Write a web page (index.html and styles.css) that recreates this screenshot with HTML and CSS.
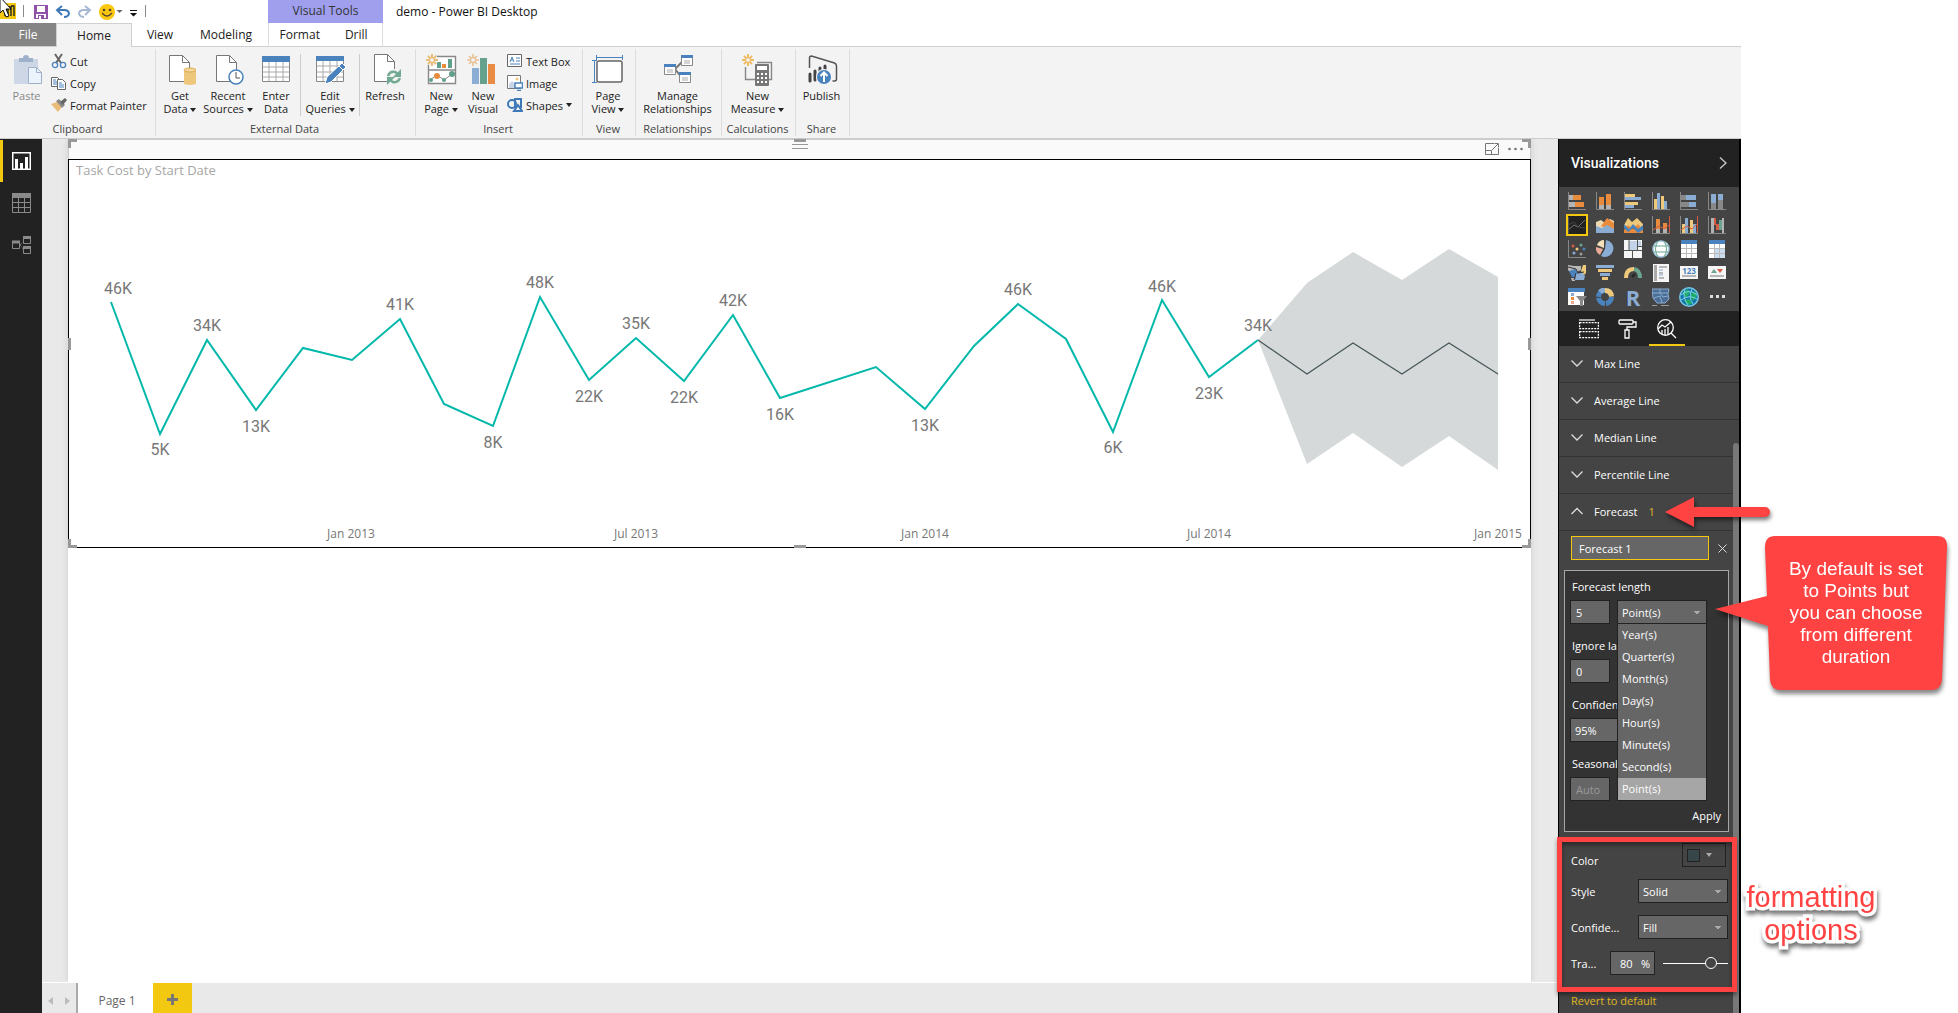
FILE: index.html
```html
<!DOCTYPE html>
<html lang="en">
<head>
<meta charset="utf-8">
<title>demo - Power BI Desktop</title>
<link rel="stylesheet" href="styles.css">
</head>
<body>
<div class="app">
  <header class="titlebar">
    <div class="title-left">
      <div class="quick">
        <svg width="150" height="24" viewBox="0 0 150 24" aria-hidden="true">
          <rect x="0" y="3" width="16" height="16" fill="#f2c811"/>
          <path d="M5 16V9h3v7M8 7h3v9M11 6h3v10" fill="none" stroke="#222" stroke-width="1.4"/>
          <path d="M0-3L11 9H6l3 7-3 1-3-7-3 3z" fill="#fff" stroke="#111"/>
          <path d="M23.500 5v12M145.500 5v12" stroke="#8a8a8a"/>
          <path d="M34 5h14v14H34z" fill="#8f52a8"/><path d="M37 6h8v6h-8zM36 14h10v4H36z" fill="#fff"/><path d="M38 15h6v4h-6z" fill="#8f52a8"/><path d="M39 16h2v3h-2z" fill="#fff"/>
          <path d="M62 6l-5 4 5 5M57 10h7q5 0 5 4-1 3-5 3" fill="none" stroke="#3e78b8" stroke-width="2"/>
          <path d="M85 6l5 4-5 5M90 10h-6q-5 0-5 4 1 3 5 3" fill="none" stroke="#a5b8d2" stroke-width="2"/>
          <circle cx="107" cy="12" r="8" fill="#fcc70f"/><circle cx="104" cy="10" r="1.300" fill="#543"/><circle cx="110" cy="10" r="1.300" fill="#543"/><path d="M102 13q5 6 10 0" fill="none" stroke="#543" stroke-width="1.300"/>
          <path d="M116.500 10h6l-3 3z" fill="#666"/>
          <path d="M130 10h7v1h-7zM130 13h7l-3.500 3.500z" fill="#111"/>
        </svg>
      </div>
      <nav class="tabs">
        <button class="tab file">File</button><button class="tab home">Home</button><button class="tab">View</button><button class="tab modeling">Modeling</button>
      </nav>
    </div>
    <div class="context">
      <div class="context-title">Visual Tools</div>
      <nav class="context-tabs"><button class="tab format">Format</button><button class="tab drill">Drill</button></nav>
    </div>
    <div class="doc-title">demo - Power BI Desktop</div>
  </header>

  <section class="ribbon">
    <div class="group clipboard">
      <div class="tools">
        <button class="big paste"><svg width="32" height="32"><path d="M3 5h24v25H3z" fill="#cdd7e6"/><path d="M8 4h4q0-3 3-3t3 3h4v4H8z" fill="#9fb0cb"/><path d="M17.500 13.500h8l5 5v11h-13z" fill="#ebf3fc" stroke="#9fb0cb"/><path d="M25.500 13.500v5h5" fill="none" stroke="#9fb0cb"/></svg><span>Paste</span></button>
        <div class="smalls">
          <button class="small"><svg width="16" height="16"><path d="M4 1l6 9M11 1l-6 9" stroke="#666" stroke-width="2"/><circle cx="4" cy="12" r="2.600" fill="none" stroke="#4a82bd" stroke-width="1.300"/><circle cx="12" cy="12" r="2.600" fill="none" stroke="#4a82bd" stroke-width="1.300"/></svg>Cut</button>
          <button class="small"><svg width="16" height="16"><path d="M.5 2.500h6l3 3v6h-9z" fill="#fff" stroke="#666"/><path d="M2 5h3M2 7h4M2 9h4" stroke="#4a82bd"/><path d="M6.500 4.500h5l3 3v7h-8z" fill="#fff" stroke="#666"/><path d="M8 8h3M8 10h5M8 12h5" stroke="#4a82bd"/></svg>Copy</button>
          <button class="small"><svg width="16" height="16"><path d="M0 7l6-2 5 5-4 5z" fill="#e9bd77"/><path d="M5 4l3-2 6 6-3 3z" fill="#888"/><path d="M9 5l5-4 2 2-4 5z" fill="#666"/></svg>Format Painter</button>
        </div>
      </div>
      <div class="caption">Clipboard</div>
    </div>
    <div class="group external">
      <div class="tools">
        <button class="big"><svg width="32" height="32"><path d="M5.500 1.500h13l7 7v19h-20z" fill="#fff" stroke="#777"/><path d="M18.500 1.500v7h7" fill="none" stroke="#777"/><path d="M20 16h12v14q-6 2-12 0z" fill="#edc77b"/><ellipse cx="26" cy="16" rx="6" ry="2" fill="#f3d79c" stroke="#dba94f"/></svg><span>Get<br>Data <i class="caret"></i></span></button>
        <button class="big"><svg width="32" height="32"><path d="M4.500 1.500h13l7 7v19h-20z" fill="#fff" stroke="#777"/><path d="M17.500 1.500v7h7" fill="none" stroke="#777"/><circle cx="24" cy="23" r="7" fill="#fff" stroke="#4a82bd" stroke-width="1.500"/><path d="M24 18v6h4" fill="none" stroke="#555"/></svg><span>Recent<br>Sources <i class="caret"></i></span></button>
        <button class="big enter"><svg width="32" height="32"><path d="M2.500 2.500h27v25h-27z" fill="#fff" stroke="#888"/><path d="M2 2h28v6H2z" fill="#4a82bd"/><path d="M3 13h26M3 18h26M3 23h26M9 8v19M16 8v19M23 8v19" stroke="#aaa"/></svg><span>Enter<br>Data</span></button>
        <button class="big ruled edit"><svg width="32" height="32"><path d="M2.500 2.500h27v25h-27z" fill="#fff" stroke="#888"/><path d="M2 2h28v5H2z" fill="#4a82bd"/><path d="M3 12h26M3 18h26M3 23h26M9 7v20M16 7v20M23 7v20" stroke="#aaa"/><path d="M11 30l2-7L28 9l4 4-15 15z" fill="#4a82bd" stroke="#fff"/><path d="M25 12l4 4" stroke="#fff"/></svg><span>Edit<br>Queries <i class="caret"></i></span></button>
        <button class="big ruled refresh"><svg width="32" height="32"><path d="M5.500 .5h13l7 7v20h-20z" fill="#fff" stroke="#777"/><path d="M18.500 .5v7h7" fill="none" stroke="#777"/><circle cx="25" cy="23" r="8" fill="#f3f3f3"/><path d="M19 22q2-5 7-4l3 2M31 24q-2 5-7 4l-3-2" fill="none" stroke="#73aa94" stroke-width="2.500"/><path d="M32 15v8h-8zM18 31v-8h8z" fill="#73aa94"/></svg><span>Refresh</span></button>
      </div>
      <div class="caption">External Data</div>
    </div>
    <div class="group insert">
      <div class="tools">
        <button class="big newpage"><svg width="32" height="32"><path d="M3.500 2.500h27v27h-27zM3 16h28" fill="#fff" stroke="#888" stroke-width="1.400"/><path d="M12 8h4v6h-4zM23 5h4v9h-4z" fill="#5f9f8b"/><path d="M17 10h4v4h-4z" fill="#e88b3c"/><path d="M5 26l7-5 7 5 8-6" fill="none" stroke="#888"/><circle cx="6" cy="26" r="2" fill="#5f9f8b"/><circle cx="12" cy="22" r="3" fill="#e88b3c"/><circle cx="19" cy="26" r="2" fill="#5f9f8b"/><circle cx="27" cy="20" r="3" fill="#5f9f8b"/><circle cx="7" cy="6" r="6" fill="#f3f3f3"/><path d="M7 0v3M7 9v3M1 6h3M10 6h3M3 2l2 2M9 8l2 2M11 2L9 4M5 8l-2 2" stroke="#e9bd77" stroke-width="2"/><circle cx="7" cy="6" r="2.500" fill="none" stroke="#e9bd77" stroke-width="1.300"/></svg><span>New<br>Page <i class="caret"></i></span></button>
        <button class="big newvisual"><svg width="32" height="32"><path d="M5 14h7v16H5z" fill="#8badd3"/><path d="M13 4h7v26h-7z" fill="#66a18e"/><path d="M21 10h7v20h-7z" fill="#e88b45"/><path d="M6 0v3M6 9v3M0 6h3M9 6h3M2 2l2 2M8 8l2 2M10 2L8 4M4 8l-2 2" stroke="#e6c195" stroke-width="1.600"/><circle cx="6" cy="6" r="2.500" fill="none" stroke="#e6c195" stroke-width="1.300"/></svg><span>New<br>Visual</span></button>
        <div class="smalls">
          <button class="small"><svg width="16" height="16"><path d="M.5 1.500h14v12H.5z" fill="#fff" stroke="#666"/><path d="M3 9l2-5 2 5M4 7h2M9 5h4M9 8h4M3 11h10" fill="none" stroke="#4a82bd"/></svg>Text Box</button>
          <button class="small"><svg width="16" height="16"><path d="M.5 .5h13v13H.5z" fill="#fff" stroke="#777"/><path d="M2 13V9l3-3 4 4v3z" fill="#c8d5e6"/><circle cx="10" cy="4" r="1.500" fill="#edc77b"/><path d="M8 8h7.500v5H8zM10 15.500h4" fill="#fff" stroke="#4a82bd" stroke-width="1.500"/></svg>Image</button>
          <button class="small"><svg width="16" height="16" fill="none" stroke="#3e78b8" stroke-width="2"><circle cx="5" cy="7" r="4"/><path d="M8 2h6v8H8z"/><path d="M11 8l-4 6h8z" fill="#f3f3f3"/></svg>Shapes <i class="caret"></i></button>
        </div>
      </div>
      <div class="caption">Insert</div>
    </div>
    <div class="group view">
      <div class="tools"><button class="big"><svg width="32" height="32"><rect x="5" y="7" width="25" height="21" rx="2" fill="#fff" stroke="#666" stroke-width="1.500"/><path d="M4.500 3.500h26M4.500 1v5M30.500 1v5M2.500 6.500v22M0 6.500h5M0 28.500h5" stroke="#4a82bd" fill="none"/></svg><span>Page<br>View <i class="caret"></i></span></button></div>
      <div class="caption">View</div>
    </div>
    <div class="group relations">
      <div class="tools"><button class="big"><svg width="32" height="32"><path d="M13 15l8-8M13 15l7 9" stroke="#777" stroke-width="2"/><g fill="#fff" stroke="#888"><path d="M2.500 10.500h11v10h-11zM19.500 1.500h11v10h-11zM17.500 18.500h11v10h-11z"/></g><path d="M2 10h12v3H2zM19 1h12v3H19zM17 18h12v3H17z" fill="#4a82bd"/><path d="M5 16h6M5 18h6M22 7h6M22 9h6M20 24h6M20 26h6" stroke="#aaa"/></svg><span>Manage<br>Relationships</span></button></div>
      <div class="caption">Relationships</div>
    </div>
    <div class="group calc">
      <div class="tools"><button class="big"><svg width="32" height="32"><path d="M3.500 13v12.500H14M15 8.500h14.500v17h-3" fill="none" stroke="#888" stroke-width="1.400"/><rect x="13" y="10" width="14" height="22" rx="1" fill="#777"/><path d="M15 12h10v4H15zM15 19h2v2h-2zM19 19h2v2h-2zM23 19h2v2h-2zM15 23h2v2h-2zM19 23h2v2h-2zM23 23h2v2h-2zM15 27h2v2h-2zM19 27h2v2h-2zM23 27h2v2h-2z" fill="#fff"/><path d="M6 0v3M6 9v3M0 6h3M9 6h3M2 2l2 2M8 8l2 2M10 2L8 4M4 8l-2 2" stroke="#edbd67" stroke-width="2"/><circle cx="6" cy="6" r="2.500" fill="none" stroke="#edbd67" stroke-width="1.300"/></svg><span>New<br>Measure <i class="caret"></i></span></button></div>
      <div class="caption">Calculations</div>
    </div>
    <div class="group share">
      <div class="tools"><button class="big"><svg width="32" height="32"><path d="M3.500 14V4q0-2 2-2l23 7q2 1 2 3v13q0 2-2 2h-2" fill="none" stroke="#555" stroke-width="1.500"/><path d="M4 20v7M9 17v9M14 14v4M19 12v4" stroke="#444" stroke-width="3" stroke-linecap="round"/><circle cx="18" cy="23" r="8" fill="#f3f3f3"/><circle cx="18" cy="23" r="7" fill="#4a82bd"/><path d="M18 28v-9M14.500 22l3.500-3.500 3.500 3.500" fill="none" stroke="#fff" stroke-width="2"/></svg><span>Publish</span></button></div>
      <div class="caption">Share</div>
    </div>
  </section>

  <div class="work">
    <nav class="rail">
      <button class="rail-item on" aria-label="Report"><svg width="19" height="18"><path d="M.75 .75h17.500v16.500H.75z" fill="none" stroke="#fff" stroke-width="1.500"/><path d="M3 7h3v10H3zM8 11h3v6H8zM13 5h3v12h-3z" fill="#fff"/></svg></button>
      <button class="rail-item" aria-label="Data"><svg width="19" height="20"><path d="M.5 .5h18v19H.5zM1 9.500h17M1 14.500h17M6.500 4v15M12.500 4v15" fill="none" stroke="#8a8a8a"/><path d="M0 0h19v5H0z" fill="#8a8a8a"/></svg></button>
      <button class="rail-item" aria-label="Relationships"><svg width="19" height="18" fill="none" stroke="#8a8a8a"><path d="M.5 5.500h7v7h-7zM11.500 .5h7v7h-7zM11.500 10.500h7v7h-7z"/><path d="M8 9l4-4M8 9l4 5" stroke-dasharray="1 1"/><path d="M0 6h8M11 1.500h8M11 11.500h8" stroke-width="3"/></svg></button>
    </nav>

    <main class="stage">
      <div class="canvas">
        <div class="visual">
          <div class="visual-bar">
            <button class="bare" aria-label="Focus mode"><svg width="14" height="12" fill="none" stroke="#777"><path d="M9 .5H.5v11h13V5M.5 7.500h6v4M7 7l6-6M9.500 .5h4v4"/></svg></button>
            <button class="bare" aria-label="More options"><svg width="15" height="12" fill="#777"><circle cx="1.500" cy="6" r="1.300"/><circle cx="7.500" cy="6" r="1.300"/><circle cx="13.500" cy="6" r="1.300"/></svg></button>
          </div>
          <figure class="chart">
            <figcaption>Task Cost by Start Date</figcaption>
            <svg viewBox="69 181 1461 366" role="img" aria-label="Task cost line chart with forecast">
              <path d="M1258 340L1307 283 1353 252 1402 280 1449 249 1498 277V470L1449 436 1402 467 1353 433 1307 464z" fill="#d5d9da"/>
              <path d="M1258 340L1307 374 1353 343 1402 374 1449 343 1498 374" fill="none" stroke="#465557" stroke-width="1.200"/>
              <path d="M111 302L160 434 207 340 256 410 303 348 352 360 400 319 444 404 493 426 540 297 589 380 636 338 684 381 733 315 780 398 876 367 925 409 974 346 1018 304 1066 339 1113 432 1162 300 1209 377 1258 340" fill="none" stroke="#01b8aa" stroke-width="2"/>
              <g class="values">
                <text x="118" y="294">46K</text><text x="160" y="455">5K</text><text x="207" y="331">34K</text><text x="256" y="432">13K</text><text x="400" y="310">41K</text><text x="493" y="448">8K</text><text x="540" y="288">48K</text><text x="589" y="402">22K</text><text x="636" y="329">35K</text><text x="684" y="403">22K</text><text x="733" y="306">42K</text><text x="780" y="420">16K</text><text x="925" y="431">13K</text><text x="1018" y="295">46K</text><text x="1113" y="453">6K</text><text x="1162" y="292">46K</text><text x="1209" y="399">23K</text><text x="1258" y="331">34K</text>
              </g>
              <g class="axis"><text x="351" y="538">Jan 2013</text><text x="636" y="538">Jul 2013</text><text x="925" y="538">Jan 2014</text><text x="1209" y="538">Jul 2014</text><text x="1498" y="538">Jan 2015</text></g>
            </svg>
          </figure>
          <i class="grip"></i>
          <i class="handle tl"></i><i class="handle tr"></i><i class="handle bl"></i><i class="handle br"></i><i class="handle tm"></i><i class="handle bm"></i><i class="handle lm"></i><i class="handle rm"></i>
        </div>
      </div>
      <footer class="pages">
        <div class="page-nav"><button class="bare" aria-label="Previous page"><svg width="5" height="8"><path d="M5 0v8L0 4z" fill="#bbb"/></svg></button><button class="bare" aria-label="Next page"><svg width="5" height="8"><path d="M0 0v8l5-4z" fill="#bbb"/></svg></button></div>
        <button class="page-tab">Page 1</button>
        <button class="page-add" aria-label="New page"><svg width="11" height="11"><path d="M4 0h3v4h4v3H7v4H4V7H0V4h4z" fill="#777"/></svg></button>
      </footer>
    </main>

    <aside class="pane">
      <div class="pane-head"><h2>Visualizations</h2><button class="bare" aria-label="Collapse"><svg width="8" height="12"><path d="M1 .5l6 5.500-6 5.500" fill="none" stroke="#ccc" stroke-width="1.300"/></svg></button></div>
      <div class="viz-grid">
        <button aria-label="Stacked bar chart"><svg width="18" height="18"><path d="M.5 0v17.500H18" fill="none" stroke="#888"/><path d="M1 3h4v5H1zM1 10h6v5H1z" fill="#b3b3b3"/><path d="M5 3h8v5H5zM7 10h9v5H7z" fill="#e88b3c"/></svg></button>
        <button aria-label="Stacked column chart"><svg width="18" height="18"><path d="M.5 0v17.500H18" fill="none" stroke="#888"/><path d="M3 13h5v4H3zM10 13h5v4h-5z" fill="#b3b3b3"/><path d="M3 5h5v8H3zM10 2h5v11h-5z" fill="#e88b3c"/></svg></button>
        <button aria-label="Clustered bar chart"><svg width="18" height="18"><path d="M.5 0v17.500H18" fill="none" stroke="#888"/><path d="M1 2h10v3H1zM1 10h13v3H1z" fill="#efc97b"/><path d="M1 5h16v3H1zM1 13h9v3H1z" fill="#8badd3"/></svg></button>
        <button aria-label="Clustered column chart"><svg width="18" height="18"><path d="M.5 0v17.500H18" fill="none" stroke="#888"/><path d="M2 7h3v10H2zM9 4h3v13H9z" fill="#efc97b"/><path d="M5 1h3v16H5zM12 9h3v8h-3z" fill="#8badd3"/></svg></button>
        <button aria-label="100% stacked bar chart"><svg width="18" height="18"><path d="M.5 0v17.500H18" fill="none" stroke="#888"/><path d="M1 3h5v5H1zM1 10h8v5H1z" fill="#888"/><path d="M6 3h10v5H6zM9 10h7v5H9z" fill="#8badd3"/></svg></button>
        <button aria-label="100% stacked column chart"><svg width="18" height="18"><path d="M.5 0v17.500H18" fill="none" stroke="#888"/><path d="M3 11h5v6H3zM10 8h5v9h-5z" fill="#888"/><path d="M3 2h5v9H3zM10 2h5v6h-5z" fill="#8badd3"/></svg></button>

        <button class="picked" aria-label="Line chart"><svg width="18" height="18" fill="none"><path d="M0 14l6-5 4 2 7-7" stroke="#777"/><path d="M0 9l6-3 4 5 7 1" stroke="#444"/><path d="M.5 1v16.500" stroke="#555"/></svg></button>
        <button aria-label="Area chart"><svg width="18" height="18"><path d="M0 6l5-2 4 3 5-4 4 2v11H0z" fill="#efd9b0"/><path d="M5 10l6-8 7 5v8z" fill="#e88b3c"/><path d="M0 10l6 2 5-3 7 4v4H0z" fill="#8badd3"/></svg></button>
        <button aria-label="Stacked area chart"><svg width="20" height="18"><path d="M1 9l4-7 4 4 5-4 6 6v4H1z" fill="#efc97b"/><path d="M1 14l4-5 5 4 5-5 5 6v3H1z" fill="#e88b3c"/><path d="M1 8l5 5 4-5 5 5 5-4v5l-5 3-5-5-5 4-4-4z" fill="#4a82bd"/></svg></button>
        <button aria-label="Line and stacked column chart"><svg width="18" height="18"><path d="M.5 0v17.500H17.500V0" fill="none" stroke="#888"/><path d="M17.500 0v17" stroke="#d35c43"/><path d="M4 3h4v10H4zM11 7h4v6h-4z" fill="#e88b3c"/><path d="M4 13h4v4H4zM11 13h4v4h-4z" fill="#b3b3b3"/><path d="M1 14l6-4 5 3 5-4" fill="none" stroke="#d35c43"/></svg></button>
        <button aria-label="Line and clustered column chart"><svg width="18" height="18"><path d="M.5 0v17.500H17.500V0" fill="none" stroke="#888"/><path d="M2 8h3v9H2zM10 4h3v13h-3z" fill="#efc97b"/><path d="M5 2h3v15H5zM13 8h3v9h-3z" fill="#8badd3"/><path d="M17.500 0v17" stroke="#d35c43"/><path d="M1 14l6-4 5 3 5-5" fill="none" stroke="#d35c43"/></svg></button>
        <button aria-label="Waterfall chart"><svg width="18" height="18"><path d="M.5 0v17.500H18" fill="none" stroke="#888"/><path d="M3 2h3v15H3z" fill="#b3b3b3"/><path d="M6 2h2v7H6zM8 8h3v6H8z" fill="#d35c43"/><path d="M11 4h3v10h-3z" fill="#6ba58f"/><path d="M14 2h2v15h-2z" fill="#b3b3b3"/><path d="M6.500 9v8M13.500 14v3M8.500 2v6" stroke="#444"/></svg></button>

        <button aria-label="Scatter chart"><svg width="18" height="18"><path d="M.5 0v17.500H18" fill="none" stroke="#888"/><circle cx="5" cy="6" r="1.500" fill="#d35c43"/><circle cx="13" cy="5" r="1.500" fill="#6ba58f"/><circle cx="9" cy="9" r="1.500" fill="#efc97b"/><circle cx="6" cy="13" r="1.500" fill="#8badd3"/><circle cx="16" cy="9" r="1.500" fill="#4a82bd"/><circle cx="13" cy="14" r="1.500" fill="#999"/></svg></button>
        <button aria-label="Pie chart"><svg width="18" height="18"><path d="M10 0a8.500 8.500 0 1 1-5 16l4-7z" fill="#8badd3"/><path d="M8 0v8L1 5q2-5 7-5z" fill="#f5e0bc"/><path d="M0 7l7 2-3 6q-5-3-4-8z" fill="#e9aa98"/></svg></button>
        <button aria-label="Treemap"><svg width="18" height="18"><path d="M0 0h18v18H0z" fill="#f5f5f5"/><path d="M5 1h8v9H5zM14 1h3v5h-3z" fill="#c2d2e8"/><path d="M5 0v10M13.500 0v11M0 10.500h18M8.500 11v7M13 6.500h5" stroke="#555"/></svg></button>
        <button aria-label="Map"><svg width="18" height="18" fill="none"><circle cx="9" cy="9" r="8" fill="#fff" stroke="#a7cce4" stroke-width="1.500"/><path d="M1 6h16M1 12h16M6 1q-5 8 0 16M12 1q5 8 0 16" stroke="#6ba58f"/></svg></button>
        <button aria-label="Table"><svg width="18" height="18"><path d="M1 1h16v17H1z" fill="#fff"/><path d="M1 0h16v4H1z" fill="#4a82bd"/><path d="M1 8.500h16M1 13.500h16M6.500 4v14M11.500 4v14" stroke="#bbb"/></svg></button>
        <button aria-label="Matrix"><svg width="18" height="18"><path d="M1 1h16v17H1z" fill="#fff"/><path d="M6 9h11v9H6z" fill="#cbdcf0"/><path d="M1 0h16v4H1z" fill="#4a82bd"/><path d="M1 8.500h16M1 13.500h16M6.500 4v14M11.500 4v14" stroke="#bbb"/></svg></button>

        <button aria-label="Filled map"><svg width="18" height="18"><path d="M0 1l6 1h7v4l-4 2H2L0 6z" fill="#b9b9b9"/><path d="M15 1h3v8l-3 3-2-5z" fill="#efc97b"/><path d="M1 7l6-2 3 4-2 4H4z" fill="#4a82bd"/><path d="M8 10l6-2 3 4-1 4H7z" fill="#8badd3"/><path d="M3 14h4v3H4z" fill="#b9b9b9"/><path d="M0 3l8 2 2 4 6-1M8 9l-2 7" fill="none" stroke="#333"/></svg></button>
        <button aria-label="Funnel"><svg width="18" height="18"><path d="M0 1h18v3H0z" fill="#8badd3"/><path d="M2 5h14v3H2z" fill="#efc97b"/><path d="M4 9h10v3H4z" fill="#8badd3"/><path d="M6 13h6v3H6z" fill="#efc97b"/></svg></button>
        <button aria-label="Gauge"><svg width="18" height="18" fill="none" stroke-width="4"><path d="M2 14q0-9 8-9" stroke="#efc97b"/><path d="M10 5q6 1 6 9" stroke="#6ba58f"/><path d="M8 13l3-3" stroke="#222" stroke-width="2"/></svg></button>
        <button aria-label="Multi-row card"><svg width="18" height="18"><path d="M1 0h16v18H1z" fill="#f5f5f5"/><path d="M2 1h3v16H2z" fill="#aaa"/><path d="M7 3h8M7 9h4M7 14h5" stroke="#777"/><path d="M7 6h4M7 11h4" stroke="#8badd3"/></svg></button>
        <button aria-label="Card"><svg width="18" height="18"><path d="M0 2h18v13H0z" fill="#f5f5f5"/><path d="M2 12h14" stroke="#777"/><text x="9" y="10" class="glyph">123</text></svg></button>
        <button aria-label="KPI"><svg width="18" height="18"><path d="M0 2h18v13H0z" fill="#f5f5f5"/><path d="M2 12h14" stroke="#777"/><path d="M3 9l3-4 3 4z" fill="#6ba58f"/><path d="M9 5h6l-3 4z" fill="#d35c43"/></svg></button>

        <button aria-label="Slicer"><svg width="19" height="18"><path d="M0 1h16v16H0z" fill="#fff"/><path d="M0 0h17v4H0z" fill="#4a82bd"/><path d="M3 5h3v3H3z" fill="#8badd3"/><path d="M3 9h3v3H3z" fill="#e88b3c"/><path d="M3 13h3v3H3z" fill="#e9aa98"/><path d="M8 8h11l-4 5v5h-3v-5z" fill="#888"/></svg></button>
        <button aria-label="Donut chart"><svg width="18" height="18" fill="none" stroke-width="5"><circle cx="9" cy="9" r="6.500" stroke="#4a82bd" stroke-dasharray="9 1"/><path d="M9 2.500q6 0 6.500 6" stroke="#efc97b"/><path d="M4 4q2-2 5-2" stroke="#8badd3"/></svg></button>
        <button class="letter" aria-label="R script visual">R</button>
        <button aria-label="Shape map"><svg width="18" height="18"><path d="M0 1h17l-1 5 1 5-4 4H5L1 10z" fill="#4c6d94" stroke="#8badd3"/><path d="M1 5h15M8 1v4l3 4 5-1M2 10l6-2 2 7" fill="none" stroke="#8badd3"/><path d="M0 17.500h5M9 17.500h8" stroke="#999"/></svg></button>
        <button aria-label="ArcGIS map"><svg width="20" height="20"><circle cx="10" cy="10" r="10" fill="#76c7e4"/><circle cx="10" cy="10" r="8.500" fill="#1373ac"/><path d="M3 6l6-4 2 4-4 5zM11 8l5-4 2 5-4 5zM5 13l6-1 2 5-5 1z" fill="#20ac69"/><path d="M2 8q8-7 16 0M2 13q8-6 16-1M6 2q-3 8 3 16M13 2q-4 8 1 15" fill="none" stroke="#7bd2e7"/></svg></button>
        <button aria-label="Import visual"><svg width="16" height="18"><path d="M1 7h3v3H1zM7 7h3v3H7zM13 7h3v3h-3z" fill="#ddd"/></svg></button>
      </div>
      <div class="modes">
        <button aria-label="Fields"><svg width="20" height="20" fill="none" stroke="#fff" stroke-width="1.200"><path d="M0 1h16"/><path d="M.6 3.600h18.800v6H.6zM.6 12.600h18.800v6H.6z" stroke-dasharray="2 1"/></svg></button>
        <button aria-label="Format"><svg width="20" height="20" fill="none" stroke="#fff" stroke-width="1.300"><rect x="1" y="1" width="14" height="4" rx="1"/><path d="M15 3h3v5H9v3M7 11h4v8H7z"/></svg></button>
        <button class="current" aria-label="Analytics"><svg width="20" height="20" fill="none" stroke="#fff" stroke-width="1.300"><circle cx="8.500" cy="8.500" r="7.800"/><path d="M14 14l5 5M1 10l4-4 3 2 6-5M5 11v4M8 10v6M11 8v8"/></svg></button>
      </div>

      <div class="lines">
        <button class="line"><svg width="12" height="8"><path d="M.5 1.500L6 7l5.500-5.500"/></svg>Max Line</button>
        <button class="line"><svg width="12" height="8"><path d="M.5 1.500L6 7l5.500-5.500"/></svg>Average Line</button>
        <button class="line"><svg width="12" height="8"><path d="M.5 1.500L6 7l5.500-5.500"/></svg>Median Line</button>
        <button class="line"><svg width="12" height="8"><path d="M.5 1.500L6 7l5.500-5.500"/></svg>Percentile Line</button>
        <button class="line"><svg width="12" height="8"><path d="M.5 7L6 1.500 11.500 7"/></svg>Forecast <em>1</em></button>
      </div>

      <div class="name-row">
        <input class="name" value="Forecast 1" aria-label="Forecast name">
        <button class="bare" aria-label="Remove"><svg width="9" height="9"><path d="M.5 .5l8 8M8.500 .5l-8 8" stroke="#ddd"/></svg></button>
      </div>

      <form class="forecast">
        <label for="length">Forecast length</label>
        <div class="pair">
          <input id="length" class="num" value="5">
          <div class="combo">
            <select aria-label="Forecast unit"><option>Point(s)</option></select>
            <ul class="menu">
              <li>Year(s)</li><li>Quarter(s)</li><li>Month(s)</li><li>Day(s)</li><li>Hour(s)</li><li>Minute(s)</li><li>Second(s)</li><li class="active">Point(s)</li>
            </ul>
          </div>
        </div>
        <label class="clipped" for="ignore">Ignore last</label>
        <input id="ignore" class="num" value="0">
        <label class="clipped" for="confidence">Confidence interval</label>
        <select id="confidence" class="wide"><option>95%</option></select>
        <label class="clipped" for="season">Seasonality</label>
        <input id="season" class="num last" placeholder="Auto">
        <button type="button" class="apply">Apply</button>
      </form>

      <div class="format-rows">
        <div class="row color-row"><label for="color">Color</label><button id="color" class="swatch"><i class="chip"></i><i class="caret"></i></button></div>
        <div class="row"><label for="style">Style</label><select id="style"><option>Solid</option></select></div>
        <div class="row"><label for="band">Confide...</label><select id="band"><option>Fill</option></select></div>
        <div class="row"><label for="trans">Tra...</label><span class="percent"><input id="trans" value="80"><span>%</span></span><input class="slider" type="range" min="0" max="100" value="80" aria-label="Transparency"></div>
      </div>
      <button class="revert">Revert to default</button>
      <i class="scroll"></i>

      <div class="mark-box"></div>
      <svg class="mark-arrow" width="112" height="44"><path d="M2 17L31 2v10h71a5 5 0 0 1 0 10H31v10z" fill="#ff4242"/></svg>
      <div class="callout">
        <svg width="240" height="166"><path d="M61 2H223Q234 2 233 13L228 146Q227 156 217 156H67Q57 156 56 146L54 92 1 75 53 62 51 13Q51 2 61 2z" fill="#ff4242"/></svg>
        <p>By default is set<br>to Points but<br>you can choose<br>from different<br>duration</p>
      </div>
      <p class="mark-text">formatting<br>options</p>
    </aside>
  </div>
</div>
</body>
</html>
```
FILE: styles.css
```css
* { box-sizing: border-box; }
body { margin: 0; background: #fff; font: 11px/13px "Open Sans", "Noto Sans", sans-serif; color: #222; overflow-x: hidden; }
button, input, select { font: inherit; color: inherit; margin: 0; padding: 0; border: 0; background: none; border-radius: 0; }
svg { display: block; flex: none; }
h2, p, ul, figure { margin: 0; padding: 0; }
.bare { display: flex; align-items: center; }
.caret { display: inline-block; border: 3px solid transparent; border-top: 4px solid currentColor; border-bottom: 0; vertical-align: middle; }

.app { display: flex; flex-direction: column; min-height: 100vh; margin-right: 217px; }

/* Title bar and tabs */
.titlebar { display: flex; height: 47px; }
.title-left { width: 268px; }
.quick { height: 23px; overflow: hidden; }
.tabs, .context-tabs { display: flex; height: 24px; border-bottom: 1px solid #d0d0d0; }
.tab { padding: 0; width: 56px; font-size: 12px; }
.tab.file { background: #858585; color: #fff; }
.tab.home { width: 76px; height: 24px; background: #f3f3f3; border: 1px solid #d0d0d0; border-bottom: 0; }
.tab.modeling { width: 76px; }
.context { width: 115px; }
.context-title { height: 23px; background: #9f9fee; color: #333; text-align: center; line-height: 21px; font-size: 12px; }
.context-tabs { border-left: 1px solid #ddd; border-right: 1px solid #ddd; }
.tab.format { width: 62px; }
.tab.drill { width: 52px; }
.doc-title { flex: 1; padding-left: 13px; line-height: 24px; font-size: 12px; border-bottom: 1px solid #d0d0d0; color: #111; }

/* Ribbon */
.ribbon { display: flex; height: 92px; padding: 2px 0; background: #f3f3f3; border-bottom: 1px solid #ccc; }
.group { display: flex; flex-direction: column; border-right: 1px solid #ddd; }
.clipboard { width: 156px; }
.external { width: 260px; }
.insert { width: 167px; }
.view { width: 53px; }
.relations { width: 86px; }
.calc { width: 74px; }
.share { width: 54px; }
.view, .relations, .calc, .share, .insert, .external { padding-right: 2px; }
.tools { display: flex; flex: 1; padding-top: 5px; }
.caption { height: 14px; text-align: center; color: #444; white-space: nowrap; }
.big { display: flex; flex-direction: column; align-items: center; justify-content: flex-start; width: 48px; height: 62px; gap: 3px; line-height: 13px; white-space: nowrap; }
.view .big, .relations .big, .calc .big, .share .big { width: 100%; }
.paste { width: 53px; color: #888; }
.clipboard .smalls { margin-left: -2px; }
.enter { width: 48px; }
.ruled { border-left: 1px solid #ccc; }
.edit { width: 59px; }
.refresh { width: 51px; }
.newpage { width: 50px; }
.newvisual { width: 34px; }
.smalls { display: flex; flex-direction: column; }
.insert .smalls { margin-left: 7px; }
.small { display: flex; align-items: center; gap: 3px; height: 22px; white-space: nowrap; }
.smalls { margin-top: -4px; }

/* Workspace */
.work { display: flex; flex: 1; }
.rail { width: 42px; padding-top: 1px; background: #222; }
.rail-item { display: flex; align-items: center; width: 42px; height: 42px; padding-left: 12px; }
.rail-item.on { border-left: 3px solid #f2c811; padding-left: 9px; }
.stage { flex: 1; display: flex; flex-direction: column; background: #e9e9e9; min-width: 0; }
.canvas { flex: 1; margin: 0 27px 0 26px; background: #fff; box-shadow: 0 0 6px #ccc; clip-path: inset(0 -8px); }
.visual { position: relative; width: 100%; }
.visual-bar { display: flex; align-items: center; justify-content: flex-end; gap: 9px; height: 20px; padding: 0 7px 2px; background: #fafafa; border: 1px solid #ccc; border-bottom: 0; }
.grip { position: absolute; left: calc(50% - 8px); top: 5px; width: 16px; height: 5px; border: solid #999; border-width: 1px 0; }
.chart { border: 1px solid #000; }
.chart figcaption { height: 21px; padding-left: 7px; color: #a6a6a6; font-size: 13px; line-height: 21px; }
.chart svg { width: 100%; height: auto; }
.values { font: 16px Roboto, sans-serif; fill: #777; text-anchor: middle; }
.axis { font: 12px "Open Sans", sans-serif; fill: #777; text-anchor: middle; }
.handle { position: absolute; border: 0 solid #999; width: 9px; height: 9px; }
.tl { left: 0; top: 0; border-width: 3px 0 0 3px; }
.tr { right: 0; top: 0; border-width: 3px 3px 0 0; }
.bl { left: 0; bottom: 0; border-width: 0 0 3px 3px; }
.br { right: 0; bottom: 0; border-width: 0 3px 3px 0; }
.tm, .bm { left: calc(50% - 6px); width: 12px; height: 3px; background: #999; }
.tm { top: 0; }
.bm { bottom: 0; }
.lm, .rm { top: 199px; width: 3px; height: 12px; background: #999; }
.lm { left: 0; }
.rm { right: 0; }
.pages { display: flex; height: 31px; border-top: 1px solid #fff; }
.page-nav { display: flex; align-items: center; justify-content: center; gap: 12px; width: 36px; padding-top: 5px; border-right: 2px solid #aaa; }
.page-tab { width: 75px; padding: 5px 0 0 3px; background: #fff; color: #666; font-size: 12px; }
.page-add { display: flex; align-items: center; justify-content: center; width: 39px; padding-top: 2px; background: #f2c811; }

/* Visualizations pane */
.pane { position: relative; width: 183px; background: #444; color: #fff; border: solid #000; border-width: 0 2px 0 1px; }
.pane-head { display: flex; align-items: center; justify-content: space-between; height: 48px; padding: 0 12px; background: #222; }
.pane-head h2 { font: 500 14px Roboto, sans-serif; }
.viz-grid { display: grid; grid-template-columns: repeat(6, 28px); grid-auto-rows: 24px; padding: 2px 0 2px 4px; justify-items: center; align-items: center; }
.viz-grid button { display: flex; justify-content: center; }
.picked { width: 22px; height: 22px; align-items: center; background: #222; outline: 2px solid #f2c811; outline-offset: -2px; }
.letter { font: bold 22px/20px "Open Sans", sans-serif; color: #8badd3; }
.glyph { font: bold 8px "Open Sans", sans-serif; fill: #4a82bd; text-anchor: middle; }
.modes { display: flex; height: 35px; gap: 3px; padding-left: 12px; background: #222; }
.modes button { display: flex; align-items: center; justify-content: center; width: 36px; border: solid transparent; border-width: 2px 0; }
.modes .current { border-bottom-color: #f2c811; }
.line { display: flex; align-items: center; gap: 11px; width: 100%; height: 37px; padding: 0 12px 2px; border-bottom: 1px solid #333; }
.line svg { fill: none; stroke: #ddd; stroke-width: 1.3px; }
.line em { font-style: normal; color: #e0b822; }
.name-row { display: flex; gap: 9px; padding: 5px 12px 10px; }
.name { width: 138px; height: 24px; padding: 0 7px; background: #666; border: 1px solid #f2c811; }
.forecast { display: flex; flex-direction: column; align-items: flex-start; width: 165px; height: 262px; margin-left: 5px; padding: 7px 7px 0 5px; background: #333; border: 1px solid #a6a6a6; }
.forecast label { height: 18px; margin: 0 0 4px 2px; line-height: 18px; white-space: nowrap; }
.forecast .clipped { width: 45px; overflow: hidden; }
.num, .wide, .combo select, .row select, .percent { height: 24px; background: #666; border: 1px solid #222; }
.num { width: 40px; padding: 0 5px; margin-bottom: 13px; }
.num::placeholder { color: #999; }
.num.last { margin-bottom: 6px; }
.pair { display: flex; gap: 7px; }
.combo { position: relative; width: 90px; }
select { appearance: none; }
.combo select, .row select { width: 90px; padding: 0 4px; background: linear-gradient(135deg, #aaa 50%, transparent 50%) 79px 10px / 3px 4px no-repeat, linear-gradient(225deg, #aaa 50%, transparent 50%) 76px 10px / 3px 4px no-repeat, #666; }
.wide { width: 137px; padding: 0 4px; margin-bottom: 13px; }
.menu { position: absolute; z-index: 2; top: 24px; left: 0; width: 90px; list-style: none; background: #666; border: solid #222; border-width: 0 1px 1px; }
.menu li { height: 22px; padding-left: 4px; line-height: 22px; }
.menu .active { background: #a6a6a6; }
.apply { align-self: flex-end; line-height: 18px; }
.format-rows { display: grid; gap: 12px; padding: 11px 11px 0 12px; }
.row { display: flex; align-items: center; justify-content: space-between; height: 24px; width: 157px; }
.color-row { align-items: flex-end; }
.swatch { display: flex; align-items: center; gap: 6px; width: 44px; height: 24px; margin-right: 2px; padding: 0 4px; border: 1px solid #222; color: #aaa; }
.chip { width: 13px; height: 13px; background: #374649; border: 1px solid #222; }
.percent { display: flex; align-items: center; width: 45px; margin-right: auto; padding: 0 3px 0 9px; }
.percent input { width: 21px; }
.row label { flex: 0 0 39px; white-space: nowrap; }
.slider { appearance: none; width: 65px; height: 12px; background: linear-gradient(#fff, #fff) center / 100% 1px no-repeat; }
.slider::-webkit-slider-thumb { appearance: none; width: 12px; height: 12px; border: 1px solid #fff; border-radius: 50%; background: #444; }
.revert { margin: 17px 12px 0; color: #e0b822; line-height: 18px; }
.scroll { position: absolute; top: 304px; bottom: 0; right: 0; width: 6px; background: #787878; border-radius: 3px 3px 0 0; }

/* Annotations laid over the pane */
.mark-box { position: absolute; left: -2px; top: 698px; width: 180px; height: 155px; border: 5px solid #ff4242; box-shadow: 0 3px 4px #0006, inset 0 3px 4px #0006; pointer-events: none; }
.mark-arrow { position: absolute; left: 104px; top: 356px; filter: drop-shadow(1px 3px 2px #0008); }
.callout { position: absolute; left: 155px; top: 395px; width: 240px; filter: drop-shadow(1px 4px 2px #0007); }
.callout p { position: absolute; left: 51px; top: 24px; width: 182px; text-align: center; font: 19px/22px "Liberation Sans", sans-serif; }
.mark-text { position: absolute; left: 172px; top: 742px; width: 160px; text-align: center; font: 29px/33px "Liberation Sans", sans-serif; color: #ff4242; -webkit-text-stroke: 7px #fff; paint-order: stroke fill; filter: drop-shadow(1px 4px 2px #0008); }
```
